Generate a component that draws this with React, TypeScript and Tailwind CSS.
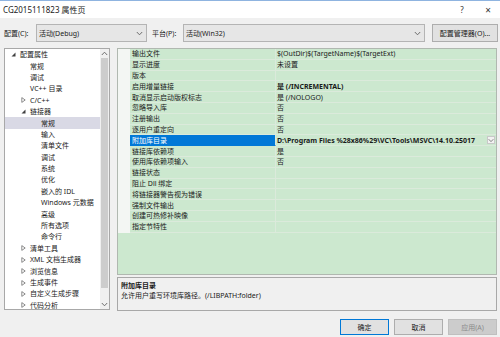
import React from "react";

type TreeRow = { label: string; level: 0 | 1 | 2; arrow?: "open" | "closed"; selected?: boolean };

const tree: TreeRow[] = [
  { label: "配置属性", level: 0, arrow: "open" },
  { label: "常规", level: 1 },
  { label: "调试", level: 1 },
  { label: "VC++ 目录", level: 1 },
  { label: "C/C++", level: 1, arrow: "closed" },
  { label: "链接器", level: 1, arrow: "open" },
  { label: "常规", level: 2, selected: true },
  { label: "输入", level: 2 },
  { label: "清单文件", level: 2 },
  { label: "调试", level: 2 },
  { label: "系统", level: 2 },
  { label: "优化", level: 2 },
  { label: "嵌入的 IDL", level: 2 },
  { label: "Windows 元数据", level: 2 },
  { label: "高级", level: 2 },
  { label: "所有选项", level: 2 },
  { label: "命令行", level: 2 },
  { label: "清单工具", level: 1, arrow: "closed" },
  { label: "XML 文档生成器", level: 1, arrow: "closed" },
  { label: "浏览信息", level: 1, arrow: "closed" },
  { label: "生成事件", level: 1, arrow: "closed" },
  { label: "自定义生成步骤", level: 1, arrow: "closed" },
  { label: "代码分析", level: 1, arrow: "closed" },
];

type Prop = { name: string; value: string; bold?: boolean; selected?: boolean };

const props: Prop[] = [
  { name: "输出文件", value: "$(OutDir)$(TargetName)$(TargetExt)" },
  { name: "显示进度", value: "未设置" },
  { name: "版本", value: "" },
  { name: "启用增量链接", value: "是 (/INCREMENTAL)", bold: true },
  { name: "取消显示启动版权标志", value: "是 (/NOLOGO)" },
  { name: "忽略导入库", value: "否" },
  { name: "注册输出", value: "否" },
  { name: "逐用户重定向", value: "否" },
  { name: "附加库目录", value: "D:\\Program Files %28x86%29\\VC\\Tools\\MSVC\\14.10.25017", bold: true, selected: true },
  { name: "链接库依赖项", value: "是" },
  { name: "使用库依赖项输入", value: "否" },
  { name: "链接状态", value: "" },
  { name: "阻止 Dll 绑定", value: "" },
  { name: "将链接器警告视为错误", value: "" },
  { name: "强制文件输出", value: "" },
  { name: "创建可热修补映像", value: "" },
  { name: "指定节特性", value: "" },
];

const Chevron = ({ up = false, className = "" }: { up?: boolean; className?: string }) => (
  <svg width="7" height="5" viewBox="0 0 7 5" className={className}>
    <path d={up ? "M0.8 4 L3.5 1.2 L6.2 4" : "M0.8 1 L3.5 3.8 L6.2 1"} fill="none" stroke="#606060" strokeWidth="0.9" />
  </svg>
);

const Arrow = ({ kind }: { kind?: "open" | "closed" }) => (
  <span className="w-[9px] h-full flex items-center justify-start shrink-0">
    {kind === "open" && (
      <svg width="5" height="5" viewBox="0 0 5 5">
        <path d="M4.5 0.5 L4.5 4.5 L0.5 4.5 Z" fill="#404040" />
      </svg>
    )}
    {kind === "closed" && (
      <svg width="5" height="6" viewBox="0 0 5 6">
        <path d="M0.8 0.6 L4.2 3 L0.8 5.4 Z" fill="none" stroke="#707070" strokeWidth="0.8" />
      </svg>
    )}
  </span>
);

const padByLevel = ["pl-[6px]", "pl-[16px]", "pl-[27px]"];

export default function App() {
  return (
    <div className="w-[500px] h-[337px] bg-[#f0f0f0] flex flex-col overflow-hidden font-['Noto_Sans','Noto_Sans_CJK_SC',sans-serif] text-[#1a1a1a] text-[7px] leading-none">
      {/* title bar */}
      <div className="h-[18px] bg-white border-t border-[#8fb4e0] flex items-center shrink-0">
        <span className="pl-[3px] text-[8px] text-[#222]">CG2015111823 属性页</span>
        <span className="ml-auto w-[8px] text-center text-[8px] text-[#333]">?</span>
        <span className="ml-[18px] mr-[8px] w-[8px] text-center text-[10px] text-[#333]">×</span>
      </div>

      {/* config row */}
      <div className="mt-[6px] h-[18px] flex items-center shrink-0 pl-[4px] pr-[2px]">
        <span className="w-[32px]">配置(C):</span>
        <div className="w-[111px] h-full bg-[#e6e6e6] border border-[#b4b4b4] flex items-center pl-[2px] pr-[3px]">
          <span>活动(Debug)</span>
          <Chevron className="ml-auto" />
        </div>
        <span className="ml-[5px] w-[31px]">平台(P):</span>
        <div className="w-[242px] h-full bg-[#e6e6e6] border border-[#b4b4b4] flex items-center pl-[2px] pr-[3px]">
          <span>活动(Win32)</span>
          <Chevron className="ml-auto" />
        </div>
        <div className="ml-auto w-[66px] h-full bg-[#e1e1e1] border border-[#adadad] flex items-center justify-center">
          配置管理器(O)...
        </div>
      </div>

      {/* main */}
      <div className="mt-[6px] h-[263px] flex shrink-0 pl-[4px] pr-[3px]">
        {/* tree */}
        <div className="w-[106px] h-[262px] bg-white border border-[#a8a8a8] flex">
          <div className="flex-1 flex flex-col pt-0 overflow-hidden">
            {tree.map((r, i) => (
              <div
                key={i}
                className={`h-[11.4px] shrink-0 flex items-center ${padByLevel[r.level]} ${r.selected ? "bg-[#d9d9e5]" : ""}`}
              >
                <Arrow kind={r.arrow} />
                <span className="whitespace-nowrap">{r.label}</span>
              </div>
            ))}
          </div>
          <div className="w-[9px] bg-[#f0f0f0] flex flex-col items-center">
            <div className="h-[9px] flex items-center justify-center">
              <Chevron up />
            </div>
            <div className="w-[7px] flex-1 bg-[#cdcdcd] mb-[12px]" />
            <div className="h-[9px] flex items-center justify-center">
              <Chevron />
            </div>
          </div>
        </div>

        {/* right column */}
        <div className="ml-[7px] flex-1 flex flex-col">
          <div className="h-[227px] bg-[#cce8cf] border border-[#b0b8b0] flex flex-col overflow-hidden">
            {props.map((p, i) => (
              <div key={i} className="h-[10.8px] shrink-0 flex">
                <div className="w-[12px] bg-[#f3f6f3]" />
                <div
                  className={`w-[146px] flex items-center pl-[2px] border-b border-r ${
                    p.selected ? "bg-[#0078d7] text-white border-b-[#0078d7] border-r-[#dbeadb]" : "border-[#dbeadb]"
                  }`}
                >
                  <span className="whitespace-nowrap">{p.name}</span>
                </div>
                <div className="flex-1 flex items-center pl-[1px] border-b border-[#dbeadb] overflow-hidden">
                  <span className={`whitespace-nowrap ${p.bold ? "font-bold" : ""}`}>{p.value}</span>
                  {p.selected && (
                    <div className="ml-auto mr-[1px] w-[8px] h-[8px] bg-[#f2f2f2] border border-[#c8c8c8] flex items-center justify-center">
                      <Chevron />
                    </div>
                  )}
                </div>
              </div>
            ))}
          </div>
          <div className="mt-[2px] h-[34px] bg-[#f0f0f0] border border-[#a8a8a8] pl-[3px] pt-[4px] flex flex-col gap-[3px]">
            <span className="font-bold">附加库目录</span>
            <span>允许用户重写环境库路径。(/LIBPATH:folder)</span>
          </div>
        </div>
      </div>

      {/* buttons */}
      <div className="mt-[8px] h-[16px] flex justify-end gap-[5px] pr-[3px] shrink-0">
        <div className="w-[49px] h-full bg-[#e1e1e1] border border-[#0078d7] flex items-center justify-center">确定</div>
        <div className="w-[49px] h-full bg-[#e1e1e1] border border-[#adadad] flex items-center justify-center">取消</div>
        <div className="w-[49px] h-full bg-[#cccccc] border border-[#bfbfbf] text-[#8a8a8a] flex items-center justify-center">应用(A)</div>
      </div>
    </div>
  );
}
